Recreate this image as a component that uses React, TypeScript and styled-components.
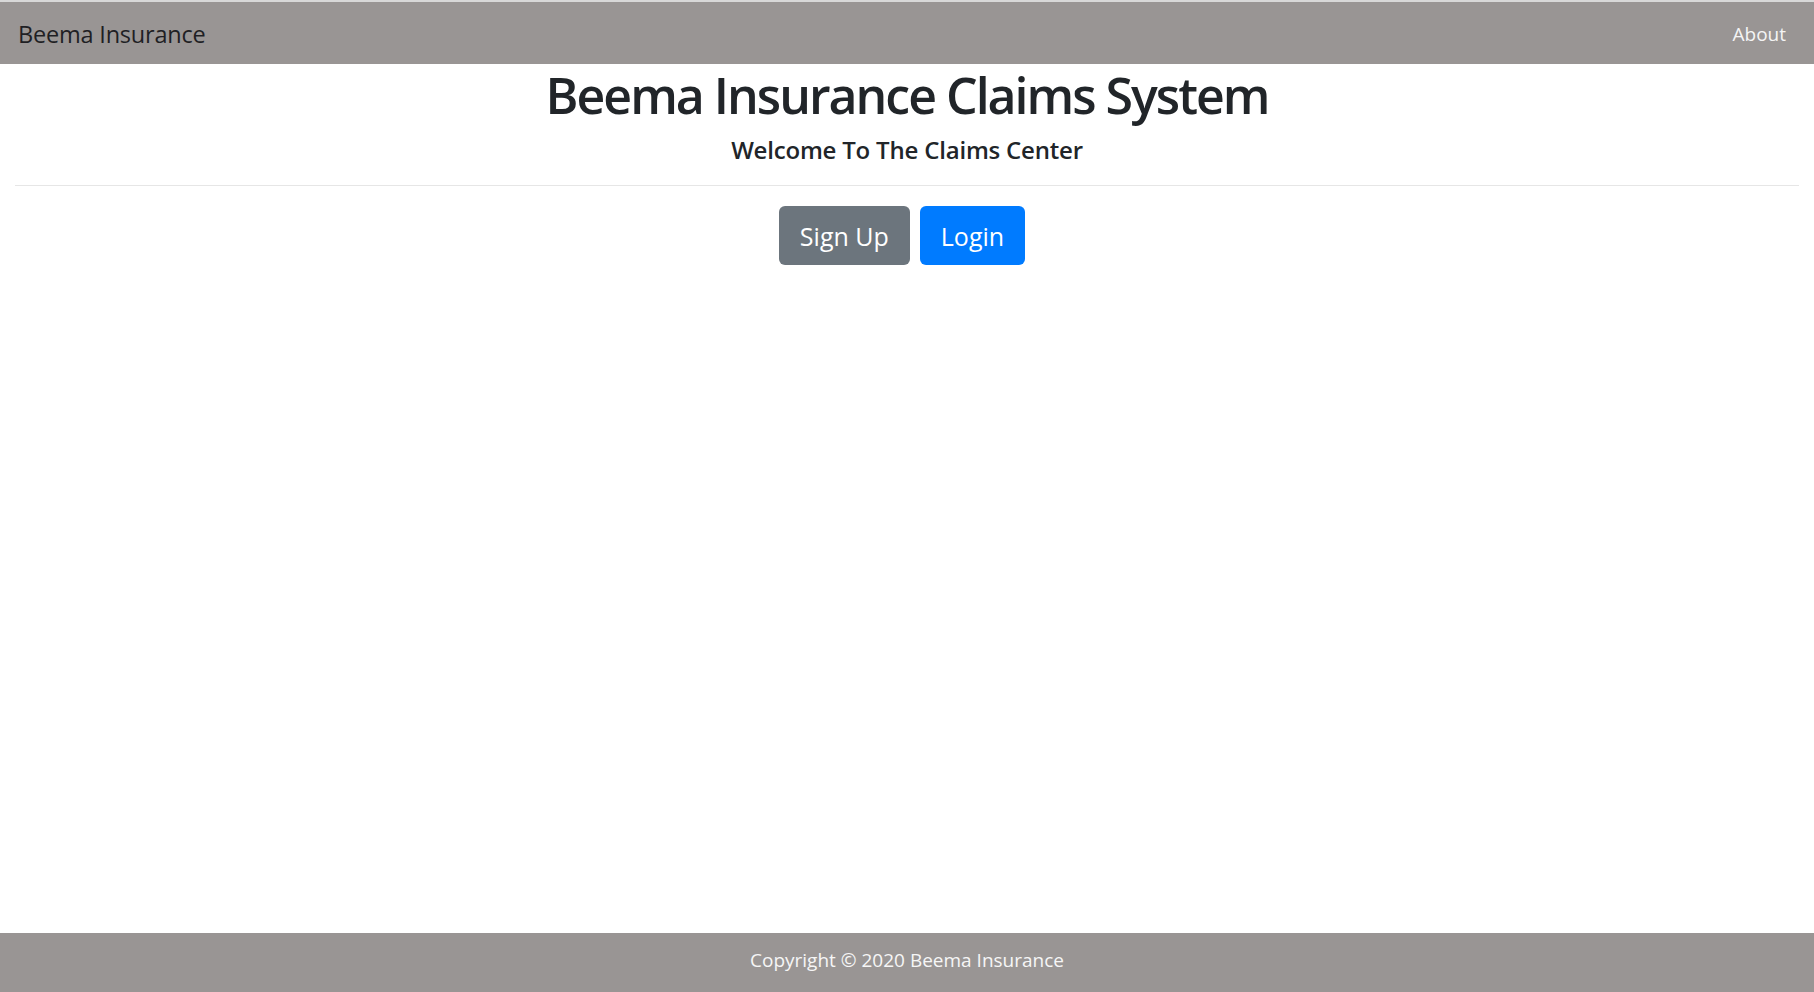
import React from "react";
import styled, { createGlobalStyle } from "styled-components";

const GlobalStyle = createGlobalStyle`
  html, body {
    margin: 0;
    padding: 0;
    background: #ffffff;
  }
  body {
    font-family: "Open Sans", "Noto Sans", "Liberation Sans", sans-serif;
    color: #212529;
  }
  * { box-sizing: border-box; }
`;

const Page = styled.div`
  min-height: 100vh;
  display: flex;
  flex-direction: column;
  border-top: 2px solid #d8d8d8;
`;

const NavBar = styled.nav`
  height: 62px;
  background: #999594;
  display: flex;
  align-items: center;
  justify-content: space-between;
  padding: 2px 28px 0 18px;
`;

const Brand = styled.a`
  font-size: 23.5px;
  color: #1f1f24;
  text-decoration: none;
  letter-spacing: -0.2px;
`;

const NavLink = styled.a`
  font-size: 19px;
  color: #f4f4f4;
  text-decoration: none;
`;

const Main = styled.main`
  flex: 1;
  display: flex;
  flex-direction: column;
  align-items: center;
`;

const Title = styled.h1`
  margin: 0;
  font-size: 50px;
  line-height: 1.25;
  font-weight: 600;
  letter-spacing: -2px;
  color: #212529;
`;

const Subtitle = styled.h4`
  margin: 9px 0 0;
  font-size: 24px;
  line-height: 1.2;
  font-weight: 600;
  letter-spacing: -0.2px;
  color: #212529;
`;

const Rule = styled.hr`
  align-self: stretch;
  margin: 21px 15px 0;
  border: 0;
  border-top: 1px solid #e6e6e6;
`;

const ButtonRow = styled.div`
  display: flex;
  gap: 10px;
  margin-top: 20px;
  padding-right: 10px;
`;

const Button = styled.button<{ $variant: "secondary" | "primary" }>`
  height: 59px;
  padding: 0 21px;
  border: none;
  border-radius: 6px;
  font-family: inherit;
  font-size: 25px;
  color: #ffffff;
  background: ${(p) => (p.$variant === "primary" ? "#007bff" : "#6c757d")};
  cursor: pointer;
`;

const Footer = styled.footer`
  height: 59px;
  background: #999594;
  display: flex;
  align-items: center;
  justify-content: center;
  padding-bottom: 6px;
  font-size: 19px;
  color: #f6f6f6;
`;

export default function App() {
  return (
    <>
      <GlobalStyle />
      <Page>
        <NavBar>
          <Brand href="#">Beema Insurance</Brand>
          <NavLink href="#">About</NavLink>
        </NavBar>
        <Main>
          <Title>Beema Insurance Claims System</Title>
          <Subtitle>Welcome To The Claims Center</Subtitle>
          <Rule />
          <ButtonRow>
            <Button $variant="secondary">Sign Up</Button>
            <Button $variant="primary">Login</Button>
          </ButtonRow>
        </Main>
        <Footer>Copyright © 2020 Beema Insurance</Footer>
      </Page>
    </>
  );
}
